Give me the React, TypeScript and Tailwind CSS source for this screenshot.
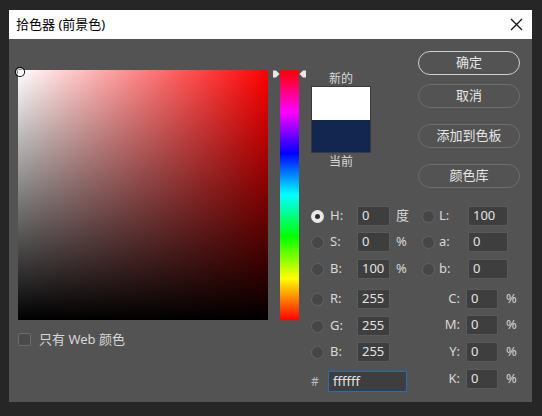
import React from "react";

const font = { fontFamily: '"Noto Sans", "Noto Sans CJK SC", sans-serif' };

function cx(...parts: (string | false | undefined)[]) {
	return parts.filter(Boolean).join(" ");
}

function Radio({ checked }: { checked?: boolean }) {
	return checked ? (
		<span className="flex h-[13px] w-[13px] items-center justify-center rounded-full bg-[#e8e8e8]">
			<span className="h-[5px] w-[5px] rounded-full bg-[#2e2e2e]" />
		</span>
	) : (
		<span className="h-[13px] w-[13px] rounded-full border border-[#636363] bg-[#464646]" />
	);
}

function Field({ value, w = "w-[33px]" }: { value: string; w?: string }) {
	return (
		<div
			className={cx(
				"flex h-[20px] items-center border border-[#5a5a5a] bg-[#3e3e3e] pl-[4px] text-[13px] text-[#e2e2e2]",
				w
			)}
		>
			{value}
		</div>
	);
}

function PickerButton({ label, primary }: { label: string; primary?: boolean }) {
	return (
		<div
			className={cx(
				"flex h-[24px] w-[102px] items-center justify-center rounded-full text-[13px] text-[#e6e6e6]",
				primary ? "border-[1.5px] border-[#cfcfcf]" : "border border-[#6c6c6c]"
			)}
		>
			{label}
		</div>
	);
}

function HsbRow({
	label,
	value,
	unit,
	checked,
	mt,
}: {
	label: string;
	value: string;
	unit?: string;
	checked?: boolean;
	mt: string;
}) {
	return (
		<div className={cx("flex h-[20px] items-center", mt)}>
			<Radio checked={checked} />
			<span className="ml-[6px] w-[27px] text-[13px] text-[#d8d8d8]">{label}</span>
			<Field value={value} />
			<span className="ml-[6px] text-[13px] text-[#d8d8d8]">{unit}</span>
		</div>
	);
}

function LabRow({ label, value, mt }: { label: string; value: string; mt: string }) {
	return (
		<div className={cx("flex h-[20px] items-center", mt)}>
			<Radio />
			<span className="ml-[4px] w-[29px] text-[13px] text-[#d8d8d8]">{label}</span>
			<Field value={value} w="w-[40px]" />
		</div>
	);
}

function CmykRow({ label, value, mt }: { label: string; value: string; mt: string }) {
	return (
		<div className={cx("flex h-[20px] items-center", mt)}>
			<span className="w-[44px] pr-[6px] text-right text-[13px] text-[#d8d8d8]">{label}</span>
			<Field value={value} w="w-[32px]" />
			<span className="ml-[8px] text-[13px] text-[#d8d8d8]">%</span>
		</div>
	);
}

export default function App() {
	return (
		<div className="h-[416px] w-[542px] bg-[#262626] pl-[9px] pt-[10px]" style={font}>
			<div className="flex h-[392px] w-[523px] flex-col bg-[#535353]">
				{/* Title bar */}
				<div className="flex h-[29px] items-center justify-between bg-white pl-[7px] pr-[9px]">
					<span className="text-[13px] text-black">拾色器 (前景色)</span>
					<svg width="13" height="13" viewBox="0 0 13 13">
						<path d="M1 1 L12 12 M12 1 L1 12" stroke="#111" strokeWidth="1.3" />
					</svg>
				</div>

				<div className="flex pl-[9px] pt-[12px]">
					{/* Color field and hue slider */}
					<div className="flex flex-col">
						<div className="mt-[19px] flex">
							<div className="relative h-[250px] w-[250px] bg-[linear-gradient(to_right,#ffffff,#ff0000)]">
								<div className="absolute inset-0 bg-[linear-gradient(to_bottom,rgba(0,0,0,0),#000000)]" />
								<div className="absolute left-[-2px] top-[-2px] h-[8px] w-[8px] rounded-full border-[1.5px] border-white ring-1 ring-black" />
							</div>
							<div className="ml-[4px] flex">
								<svg width="8" height="250" viewBox="0 0 8 250">
									<path d="M1 0.5 L4 0.5 L7.5 4 L4 7.5 L1 7.5 Z" fill="#e8e8e8" />
								</svg>
								<div className="h-[250px] w-[19px] bg-[linear-gradient(to_bottom,#ff0000,#ff00ff,#0000ff,#00ffff,#00ff00,#ffff00,#ff0000)]" />
								<svg width="8" height="250" viewBox="0 0 8 250">
									<path d="M7 0.5 L4 0.5 L0.5 4 L4 7.5 L7 7.5 Z" fill="#e8e8e8" />
								</svg>
							</div>
						</div>
						<div className="mt-[10px] flex items-center">
							<span className="h-[13px] w-[13px] rounded-[2px] border border-[#6a6a6a] bg-[#4a4a4a]" />
							<span className="ml-[8px] text-[13px] text-[#d8d8d8]">只有 Web 颜色</span>
						</div>
					</div>

					{/* Right side */}
					<div className="ml-[4px] flex flex-col">
						<div className="flex">
							<div className="flex w-[60px] flex-col items-center">
								<span className="mt-[21px] text-[12px] leading-[14px] text-[#d8d8d8]">新的</span>
								<div className="flex h-[67px] w-[60px] flex-col border border-[#3a3a3a]">
									<div className="h-[33px] bg-white" />
									<div className="flex-1 bg-[#13264f]" />
								</div>
								<span className="mt-[2px] text-[12px] leading-[14px] text-[#d8d8d8]">当前</span>
							</div>
							<div className="ml-[47px] flex flex-col">
								<PickerButton label="确定" primary />
								<div className="mt-[9px]">
									<PickerButton label="取消" />
								</div>
								<div className="mt-[16px]">
									<PickerButton label="添加到色板" />
								</div>
								<div className="mt-[16px]">
									<PickerButton label="颜色库" />
								</div>
							</div>
						</div>

						{/* Values */}
						<div className="mt-[18px] flex">
							<div className="flex w-[111px] flex-col">
								<HsbRow label="H:" value="0" unit="度" checked mt="" />
								<HsbRow label="S:" value="0" unit="%" mt="mt-[6px]" />
								<HsbRow label="B:" value="100" unit="%" mt="mt-[7px]" />
								<HsbRow label="R:" value="255" mt="mt-[10px]" />
								<HsbRow label="G:" value="255" mt="mt-[7px]" />
								<HsbRow label="B:" value="255" mt="mt-[6px]" />
								<div className="mt-[9px] flex h-[21px] items-center">
									<span className="w-[17px] text-[12px] text-[#bcbcbc]">#</span>
									<div className="flex h-[21px] w-[79px] items-center border border-[#2b6cb0] bg-[#3e3e3e] pl-[4px] text-[13px] text-[#e2e2e2]">
										ffffff
									</div>
								</div>
							</div>
							<div className="flex flex-col">
								<LabRow label="L:" value="100" mt="" />
								<LabRow label="a:" value="0" mt="mt-[6px]" />
								<LabRow label="b:" value="0" mt="mt-[7px]" />
								<CmykRow label="C:" value="0" mt="mt-[10px]" />
								<CmykRow label="M:" value="0" mt="mt-[6px]" />
								<CmykRow label="Y:" value="0" mt="mt-[7px]" />
								<CmykRow label="K:" value="0" mt="mt-[7px]" />
							</div>
						</div>
					</div>
				</div>
			</div>
		</div>
	);
}
